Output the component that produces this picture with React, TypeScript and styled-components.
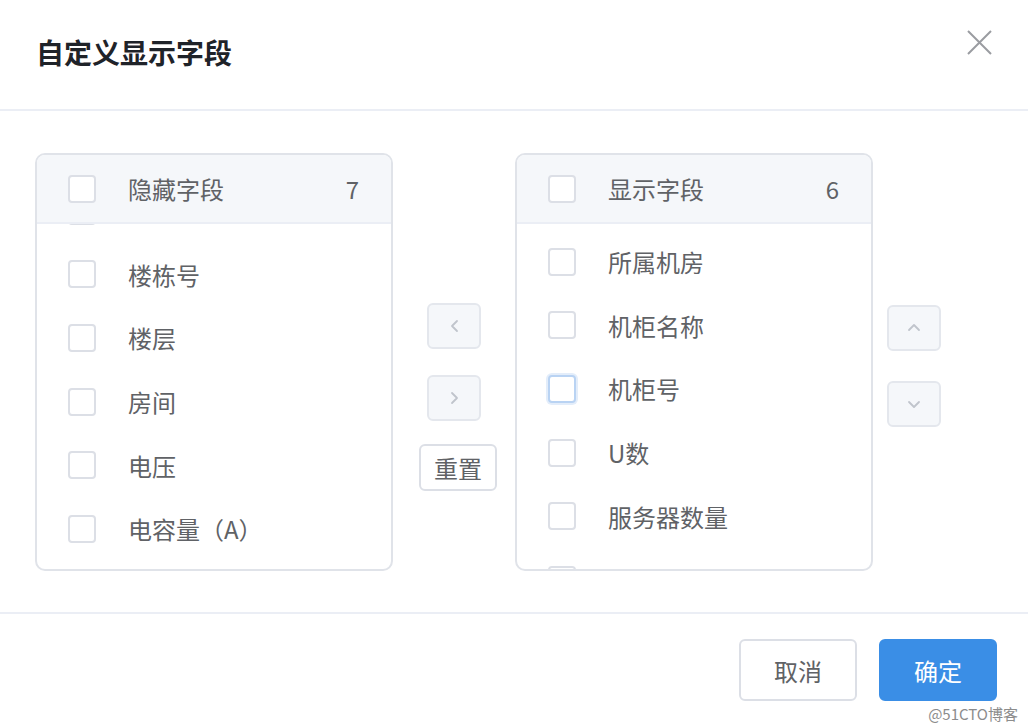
import React, { useLayoutEffect, useRef } from 'react';
import styled, { createGlobalStyle } from 'styled-components';

const GlobalStyle = createGlobalStyle`
	html, body {
		margin: 0;
		padding: 0;
		background: #fff;
	}
	body {
		font-family: "Noto Sans CJK SC", "Noto Sans", "Liberation Sans", sans-serif;
	}
`;

const Dialog = styled.div`
	position: relative;
	width: 1028px;
	height: 728px;
	background: #fff;
	display: flex;
	flex-direction: column;
	overflow: hidden;
`;

const Header = styled.div`
	height: 111px;
	flex-shrink: 0;
	box-sizing: border-box;
	padding: 34px 36px 0 36px;
	border-bottom: 2px solid #ebeef5;
	display: flex;
	justify-content: space-between;
	align-items: flex-start;
`;

const Title = styled.div`
	font-size: 28px;
	line-height: 36px;
	font-weight: 700;
	color: #1f2329;
`;

const CloseButton = styled.button`
	width: 30px;
	height: 30px;
	margin: -7px -2px 0 0;
	padding: 0;
	border: none;
	background: transparent;
	display: flex;
	align-items: center;
	justify-content: center;
	cursor: pointer;
`;

const Body = styled.div`
	height: 503px;
	flex-shrink: 0;
	box-sizing: border-box;
	padding: 42px 0 0 35px;
	border-bottom: 2px solid #ebeef5;
	display: flex;
	align-items: flex-start;
`;

const Panel = styled.div`
	width: 358px;
	height: 418px;
	flex-shrink: 0;
	box-sizing: border-box;
	border: 2px solid #e0e3e9;
	border-radius: 10px;
	overflow: hidden;
	display: flex;
	flex-direction: column;
	background: #fff;
`;

const PanelHeader = styled.div`
	height: 69px;
	flex-shrink: 0;
	box-sizing: border-box;
	background: #f5f7fa;
	border-bottom: 2px solid #ebeef5;
	display: flex;
	align-items: center;
	padding: 0 32px 0 31px;
	position: relative;
	z-index: 1;
`;

const HeaderLabel = styled.span`
	flex: 1;
	font-size: 24px;
	color: #606266;
	margin-left: 32px;
`;

const Count = styled.span`
	font-size: 24px;
	color: #606266;
`;

const List = styled.div`
	flex: 1;
	overflow-y: auto;
	padding: 6px 0;
	box-sizing: border-box;
	scrollbar-width: none;
	&::-webkit-scrollbar {
		display: none;
	}
`;

const Item = styled.div`
	height: 63.6px;
	display: flex;
	align-items: center;
	padding-left: 31px;
`;

const ItemLabel = styled.span`
	font-size: 24px;
	color: #606266;
	margin-left: 32px;
	white-space: nowrap;
`;

const Box = styled.span<{ $focused?: boolean }>`
	display: inline-block;
	width: 28px;
	height: 28px;
	box-sizing: border-box;
	border: 2px solid ${p => (p.$focused ? '#b9d3f3' : '#dcdfe6')};
	border-radius: 4px;
	background: #fff;
	flex-shrink: 0;
	box-shadow: ${p => (p.$focused ? '0 0 0 2px #e3edfa' : 'none')};
`;

const MiddleColumn = styled.div`
	width: 122px;
	padding-top: 150px;
	display: flex;
	flex-direction: column;
	align-items: center;
`;

const SideColumn = styled.div`
	padding: 152px 0 0 14px;
	display: flex;
	flex-direction: column;
	gap: 30px;
`;

const ArrowButton = styled.button<{ $gapTop?: number }>`
	width: 54px;
	height: 46px;
	margin: ${p => p.$gapTop ?? 0}px 0 0 0;
	padding: 0;
	box-sizing: border-box;
	background: #f5f7fa;
	border: 2px solid #e4e7ed;
	border-radius: 6px;
	display: flex;
	align-items: center;
	justify-content: center;
	cursor: not-allowed;
`;

const ResetButton = styled.button`
	width: 78px;
	height: 47px;
	margin: 23px 0 0 8px;
	padding: 0;
	box-sizing: border-box;
	background: #fff;
	border: 2px solid #dcdfe6;
	border-radius: 6px;
	font-family: inherit;
	font-size: 24px;
	color: #606266;
	cursor: pointer;
`;

const Footer = styled.div`
	flex: 1;
	display: flex;
	justify-content: flex-end;
	align-items: flex-start;
	gap: 22px;
	padding: 25px 31px 0 0;
`;

const FooterButton = styled.button<{ $primary?: boolean }>`
	width: 118px;
	height: 62px;
	margin: 0;
	padding: 0;
	box-sizing: border-box;
	border-radius: 6px;
	font-family: inherit;
	font-size: 24px;
	border: 2px solid ${p => (p.$primary ? '#3a8ee6' : '#dcdfe6')};
	background: ${p => (p.$primary ? '#3a8ee6' : '#fff')};
	color: ${p => (p.$primary ? '#fff' : '#606266')};
	cursor: pointer;
`;

const Watermark = styled.div`
	position: absolute;
	right: 10px;
	bottom: 4px;
	font-size: 15px;
	color: #8c8c8c;
	text-shadow: 0 0 2px #fff, 0 0 2px #fff;
`;

const Chevron: React.FC<{ dir: 'left' | 'right' | 'up' | 'down' }> = ({ dir }) => {
	const paths = {
		left: 'M8 2 L3 7 L8 12',
		right: 'M3 2 L8 7 L3 12',
		up: 'M2 8 L7 3 L12 8',
		down: 'M2 4 L7 9 L12 4'
	};
	const w = dir === 'left' || dir === 'right' ? 11 : 14;
	const h = dir === 'left' || dir === 'right' ? 14 : 12;
	return (
		<svg width={w} height={h} viewBox={`0 0 ${w} ${h}`}>
			<path d={paths[dir]} fill="none" stroke="#c0c4cc" strokeWidth="1.8" strokeLinecap="round" strokeLinejoin="round" />
		</svg>
	);
};

const hiddenFields = ['园区', '楼栋号', '楼层', '房间', '电压', '电容量（A）', '电功率'];
const shownFields = ['所属机房', '机柜名称', '机柜号', 'U数', '服务器数量', '网络设备数量'];

const TransferPanel: React.FC<{ title: string; items: string[]; scroll?: number; focusIndex?: number }> = ({
	title,
	items,
	scroll = 0,
	focusIndex = -1
}) => {
	const listRef = useRef<HTMLDivElement>(null);

	useLayoutEffect(() => {
		if (listRef.current) {
			listRef.current.scrollTop = scroll;
		}
	}, [scroll]);

	return (
		<Panel>
			<PanelHeader>
				<Box />
				<HeaderLabel>{title}</HeaderLabel>
				<Count>{items.length}</Count>
			</PanelHeader>
			<List ref={listRef}>
				{items.map((item, i) => (
					<Item key={item}>
						<Box $focused={i === focusIndex} />
						<ItemLabel>{item}</ItemLabel>
					</Item>
				))}
			</List>
		</Panel>
	);
};

const App: React.FC = () => {
	return (
		<>
			<GlobalStyle />
			<Dialog>
				<Header>
					<Title>自定义显示字段</Title>
					<CloseButton aria-label="关闭">
						<svg width="25" height="25" viewBox="0 0 25 25">
							<path d="M1 1 L24 24 M24 1 L1 24" stroke="#9a9ca1" strokeWidth="2" fill="none" />
						</svg>
					</CloseButton>
				</Header>
				<Body>
					<TransferPanel title="隐藏字段" items={hiddenFields} scroll={51} />
					<MiddleColumn>
						<ArrowButton>
							<Chevron dir="left" />
						</ArrowButton>
						<ArrowButton $gapTop={26}>
							<Chevron dir="right" />
						</ArrowButton>
						<ResetButton>重置</ResetButton>
					</MiddleColumn>
					<TransferPanel title="显示字段" items={shownFields} focusIndex={2} />
					<SideColumn>
						<ArrowButton>
							<Chevron dir="up" />
						</ArrowButton>
						<ArrowButton>
							<Chevron dir="down" />
						</ArrowButton>
					</SideColumn>
				</Body>
				<Footer>
					<FooterButton>取消</FooterButton>
					<FooterButton $primary>确定</FooterButton>
				</Footer>
				<Watermark>@51CTO博客</Watermark>
			</Dialog>
		</>
	);
};

export default App;
